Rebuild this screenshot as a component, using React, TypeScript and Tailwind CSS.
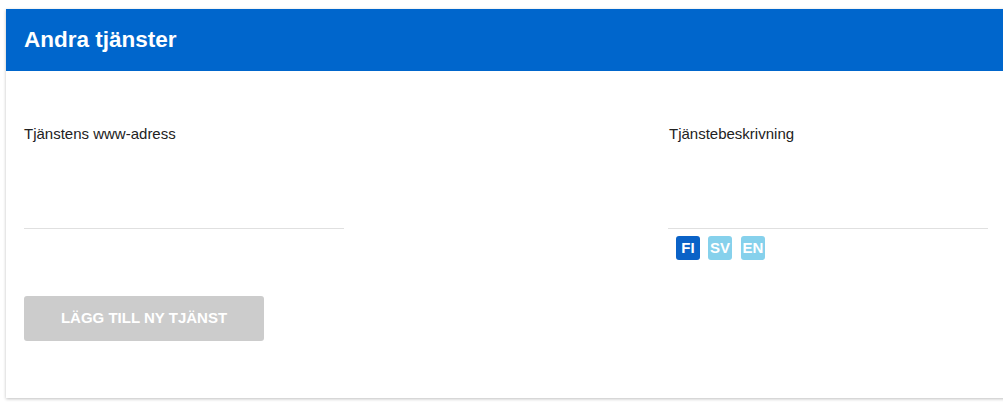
const font = { fontFamily: '"Liberation Sans", Arial, sans-serif' };

const languages = [
  { code: "FI", active: true },
  { code: "SV", active: false },
  { code: "EN", active: false },
];

export default function App() {
  return (
    <main className="min-h-screen bg-white pl-[6px] pt-[9px] overflow-hidden" style={font}>
      <section className="w-[1010px] bg-white shadow-[0_1px_3px_rgba(0,0,0,0.25)]">
        <header className="flex h-[62px] items-center bg-[#0066cc] px-[18px]">
          <h1 className="text-[22.5px] font-bold text-white">Andra tjänster</h1>
        </header>

        <div className="px-[18px] pt-[55px] pb-[57px]">
          <div className="flex gap-[324px]">
            <div className="w-[320px]">
              <label className="block text-[15px] leading-4 text-[#222]">Tjänstens www-adress</label>
              <div className="h-[87px] border-b border-[#e0e0e0]" />
            </div>

            <div className="w-[320px]">
              <label className="block pl-px text-[15px] leading-4 text-[#222]">Tjänstebeskrivning</label>
              <div className="h-[87px] border-b border-[#e0e0e0]" />
              <div className="mt-[7px] flex gap-2 pl-2">
                {languages.map((lang) => (
                  <span
                    key={lang.code}
                    className={
                      "flex h-6 w-6 items-center justify-center rounded-[3px] text-[15px] font-bold text-white last:ml-px " +
                      (lang.active ? "bg-[#0a62c7]" : "bg-[#86d1ec]")
                    }
                  >
                    {lang.code}
                  </span>
                ))}
              </div>
            </div>
          </div>

          <button
            disabled
            className="mt-[36px] h-[45px] w-[240px] rounded-[3px] bg-[#cccccc] text-[15px] font-bold uppercase text-white"
          >
            Lägg till ny tjänst
          </button>
        </div>
      </section>
    </main>
  );
}
